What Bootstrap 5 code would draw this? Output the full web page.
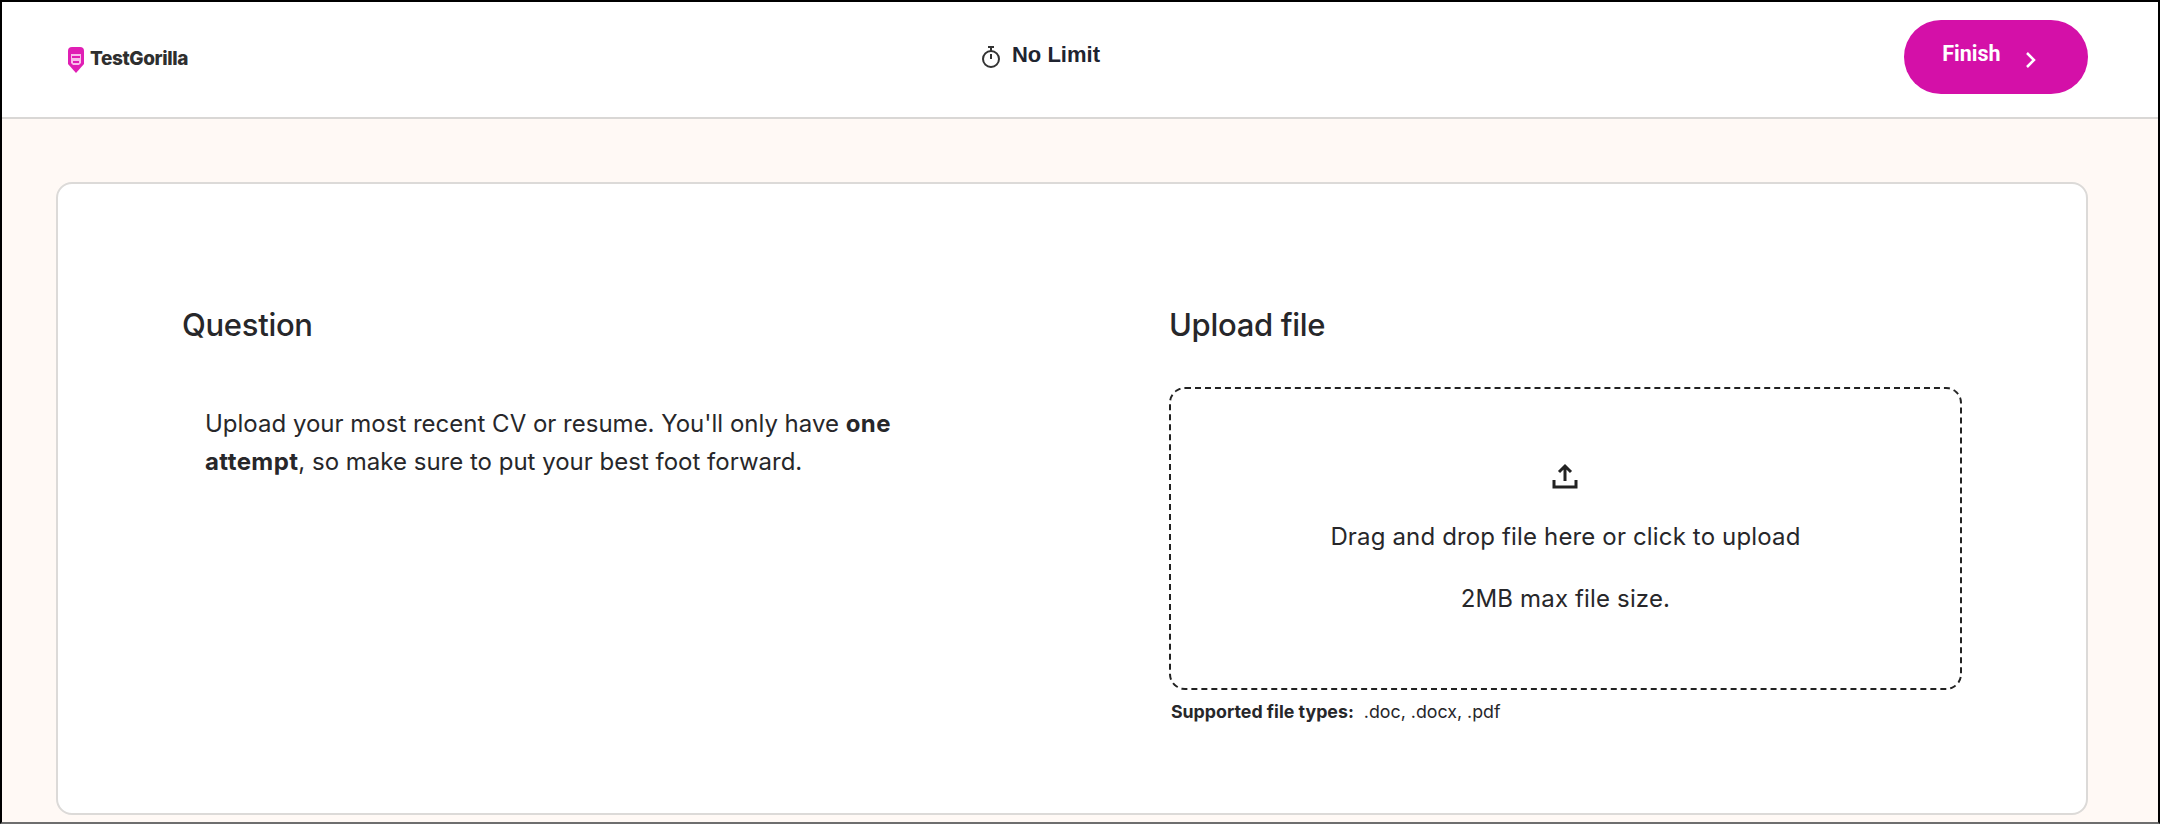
<!DOCTYPE html>
<html lang="en">
<head>
  <meta charset="UTF-8">
  <meta name="viewport" content="width=device-width, initial-scale=1.0">
  <title>TestGorilla - Upload file</title>
  <link href="https://cdn.jsdelivr.net/npm/bootstrap@5.3.2/dist/css/bootstrap.min.css" rel="stylesheet">
  <style>
    html, body { height: 100%; }
    body {
      background: #fff9f5;
      color: #27272a;
      font-family: "Inter", "Liberation Sans", sans-serif;
      border: solid #000;
      border-width: 2px 2px 2px 2px;
      border-bottom-color: #6e6e6e;
      overflow: hidden;
    }
    .tg-top { height: 117px; background: #fff; border-bottom: 2px solid #d9d7d5; padding: 0 70px 5px 64px; }
    .tg-top > div { flex: 1 1 0; }
    .tg-logo { padding-top: 5px; }
    .tg-brand { font-size: 19px; font-weight: 800; color: #2f2f2f; letter-spacing: -0.4px; }
    .tg-timer { font-family: "Liberation Sans", sans-serif; font-size: 22px; font-weight: 700; color: #1f2430; padding-right: 74px; gap: 10px; }
    .tg-timer span { position: relative; top: -3px; }
    .tg-finish {
      width: 184px; height: 74px; border-radius: 37px; border: 0; padding: 0 14px 0 0;
      background: #d410a8; color: #fff;
      font-family: Roboto, sans-serif; font-size: 21.5px; font-weight: 700;
    }
    .tg-finish:hover { background: #d410a8; color: #fff; }
    .tg-finish span { position: relative; top: -3px; }
    .tg-finish svg { position: relative; top: 3px; }
    .tg-panel {
      margin: 63px 70px 0 54px; height: 633px;
      background: #fff; border: 2px solid #dcdad8; border-radius: 16px;
      padding: 121px 124px 0 124px;
    }
    .tg-title { font-size: 31px; font-weight: 500; line-height: 40px; letter-spacing: -0.3px; margin-bottom: 42px; }
    .tg-left { width: 988px; }
    .tg-right { width: 794px; }
    .tg-text { font-size: 24px; line-height: 38px; padding-left: 23px; width: 740px; margin-top: 60px; }
    .tg-text strong { font-weight: 700; letter-spacing: 0.4px; }
    .tg-drop {
      height: 303px; border: 2px dashed #222; border-radius: 16px;
      font-size: 24px; letter-spacing: 0.15px;
    }
    .tg-drop svg { margin-bottom: 30px; }
    .tg-drop p { margin: 0; line-height: 34px; }
    .tg-drop p + p { margin-top: 28px; }
    .tg-types { font-size: 17.8px; line-height: 22px; margin-top: 11px; padding-left: 2px; }
    .tg-types b { font-weight: 700; margin-right: 5px; }
  </style>
</head>
<body>
  <header class="tg-top d-flex align-items-center">
    <div class="tg-logo d-flex align-items-center gap-1">
      <svg width="20" height="28" viewBox="0 0 20 28">
        <path d="M6 1h8q4 0 4 4v13l-8 9-8-9V5q0-4 4-4z" fill="#e01fb4"/>
        <path d="M5 8h10v9l-2 2H7l-2-2z" fill="#f9bdea"/>
        <rect x="6" y="10" width="8" height="2" fill="#e01fb4"/>
        <rect x="7" y="15" width="6" height="2" fill="#e01fb4"/>
      </svg>
      <span class="tg-brand">TestGorilla</span>
    </div>
    <div class="d-flex align-items-center justify-content-center tg-timer">
      <svg width="22" height="24" viewBox="0 0 22 24" fill="none" stroke="#333" stroke-width="2">
        <circle cx="11" cy="14" r="8"/>
        <path d="M8 2h6M11 2v4M11 14V9"/>
      </svg>
      <span>No Limit</span>
    </div>
    <div class="d-flex justify-content-end">
      <button type="button" class="btn tg-finish d-flex align-items-center justify-content-center gap-4">
        <span>Finish</span>
        <svg width="11" height="18" viewBox="0 0 11 18" fill="none" stroke="#fff" stroke-width="2.5"><path d="M2 2l7 7-7 7"/></svg>
      </button>
    </div>
  </header>

  <main class="tg-panel d-flex">
    <section class="tg-left">
      <h2 class="tg-title">Question</h2>
      <p class="tg-text">Upload your most recent CV or resume. You'll only have <strong>one attempt</strong>, so make sure to put your best foot forward.</p>
    </section>
    <section class="tg-right">
      <h2 class="tg-title">Upload file</h2>
      <div class="tg-drop d-flex flex-column align-items-center justify-content-center">
        <svg width="28" height="28" viewBox="0 0 28 28" fill="none" stroke="#222" stroke-width="3">
          <path d="M14 19V5M8 10l6-6 6 6M3 18v7h22v-7"/>
        </svg>
        <p>Drag and drop file here or click to upload</p>
        <p>2MB max file size.</p>
      </div>
      <div class="tg-types"><b>Supported file types:</b> .doc, .docx, .pdf</div>
    </section>
  </main>
</body>
</html>
